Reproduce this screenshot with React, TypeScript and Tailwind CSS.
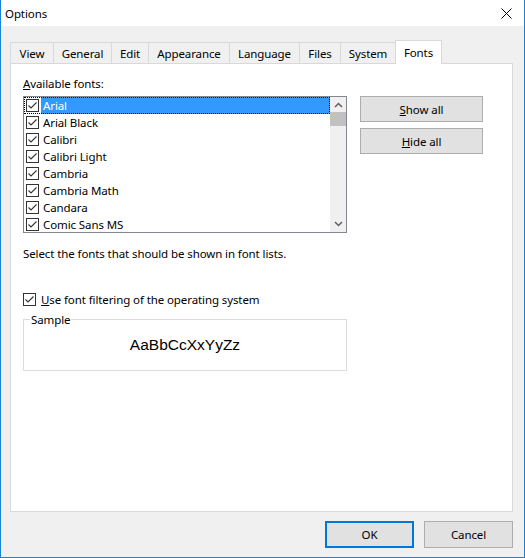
import React from 'react';

const tabs = [
  { label: 'View', w: 'w-[43px]' },
  { label: 'General', w: 'w-[58px]' },
  { label: 'Edit', w: 'w-[37px]' },
  { label: 'Appearance', w: 'w-[81px]' },
  { label: 'Language', w: 'w-[70px]' },
  { label: 'Files', w: 'w-[41px]' },
  { label: 'System', w: 'w-[55px]' },
];

const fonts = [
  'Arial',
  'Arial Black',
  'Calibri',
  'Calibri Light',
  'Cambria',
  'Cambria Math',
  'Candara',
  'Comic Sans MS',
];

const Check: React.FC = () => (
  <span className="flex h-[13px] w-[13px] shrink-0 items-center justify-center border border-[#333333] bg-white">
    <svg width="11" height="11" viewBox="0 0 11 11">
      <path d="M1.5 5.5 L4 8 L9.5 2.5" fill="none" stroke="#333333" strokeWidth="1.1" />
    </svg>
  </span>
);

const Chevron: React.FC<{ down?: boolean }> = ({ down }) => (
  <svg width="9" height="6" viewBox="0 0 9 6">
    <path
      d={down ? 'M1 1 L4.5 4.5 L8 1' : 'M1 5 L4.5 1.5 L8 5'}
      fill="none"
      stroke="#606060"
      strokeWidth="1.5"
    />
  </svg>
);

const App: React.FC = () => {
  return (
    <div className="flex h-[558px] w-[525px] flex-col border-x border-b border-[#1883d7] bg-[#f0f0f0] font-['Noto_Sans',sans-serif] text-[11.5px] tracking-[-0.1px] text-black">
      {/* Title bar */}
      <div className="flex h-[26px] shrink-0 items-center justify-between bg-white pl-[4px] pr-[12px]">
        <span className="leading-[15px]">Options</span>
        <svg width="11" height="11" viewBox="0 0 11 11">
          <path d="M0.5 0.5 L10.5 10.5 M10.5 0.5 L0.5 10.5" stroke="#000" strokeWidth="1" />
        </svg>
      </div>

      <div className="flex flex-col pl-[9px] pr-[11px] pt-[14px]">
        {/* Tabs */}
        <div className="flex h-[23px] items-end">
          {tabs.map((t) => (
            <div
              key={t.label}
              className={`${t.w} flex h-[21px] items-center justify-center border-l border-t border-[#d9d9d9] bg-[#f0f0f0] pt-[1px] leading-[15px]`}
            >
              {t.label}
            </div>
          ))}
          <div className="relative z-10 -mb-px flex h-[24px] w-[47px] items-center justify-center border-x border-t border-[#d9d9d9] bg-white pb-[1px] leading-[15px]">
            Fonts
          </div>
        </div>

        {/* Panel */}
        <div className="flex h-[449px] flex-col border border-[#d9d9d9] bg-white px-[12px]">
          <div className="mt-[12px] h-[15px] leading-[15px]">
            <span className="underline">A</span>vailable fonts:
          </div>

          <div className="mt-[5px] flex items-start gap-[13px]">
            <div className="flex h-[137px] w-[324px] border border-[#828790] bg-white">
              <div className="flex flex-1 flex-col">
                {fonts.map((f, i) => (
                  <div
                    key={f}
                    className={`flex h-[17px] items-center pl-[2px] ${
                      i === 0 ? 'outline-1 -outline-offset-1 outline-dotted outline-black' : ''
                    }`}
                  >
                    <Check />
                    <span
                      className={`ml-[2px] flex h-[17px] flex-1 items-center pl-[2px] leading-[15px] ${
                        i === 0 ? 'bg-[#3399ff] text-white' : ''
                      }`}
                    >
                      {f}
                    </span>
                  </div>
                ))}
              </div>
              <div className="flex w-[16px] flex-col bg-[#f0f0f0]">
                <div className="flex h-[15px] items-center justify-center">
                  <Chevron />
                </div>
                <div className="h-[14px] bg-[#c1c1c1]" />
                <div className="flex-1" />
                <div className="flex h-[17px] items-center justify-center">
                  <Chevron down />
                </div>
              </div>
            </div>

            <div className="flex w-[123px] flex-col gap-[6px]">
              <button className="h-[26px] border border-[#adadad] bg-[#e1e1e1] leading-[15px]">
                <span className="underline">S</span>how all
              </button>
              <button className="h-[26px] border border-[#adadad] bg-[#e1e1e1] leading-[15px]">
                <span className="underline">H</span>ide all
              </button>
            </div>
          </div>

          <div className="mt-[13px] h-[15px] leading-[15px]">
            Select the fonts that should be shown in font lists.
          </div>

          <div className="mt-[30px] flex h-[17px] items-center">
            <Check />
            <span className="ml-[5px] leading-[15px]">
              <span className="underline">U</span>se font filtering of the operating system
            </span>
          </div>

          <fieldset className="mt-[4px] h-[59px] w-[324px] border border-[#dcdcdc] px-0">
            <legend className="ml-[6px] px-[1px] leading-[15px]">Sample</legend>
            <div className="flex h-[36px] items-center justify-center font-['Liberation_Sans',Arial,sans-serif] text-[15.5px] tracking-normal">
              AaBbCcXxYyZz
            </div>
          </fieldset>
        </div>

        {/* Footer */}
        <div className="flex justify-end gap-[10px] pt-[9px]">
          <button className="h-[27px] w-[89px] border-2 border-[#0078d7] bg-[#e1e1e1] leading-[15px]">
            OK
          </button>
          <button className="h-[27px] w-[89px] border border-[#adadad] bg-[#e1e1e1] leading-[15px]">
            Cancel
          </button>
        </div>
      </div>
    </div>
  );
};

export default App;
